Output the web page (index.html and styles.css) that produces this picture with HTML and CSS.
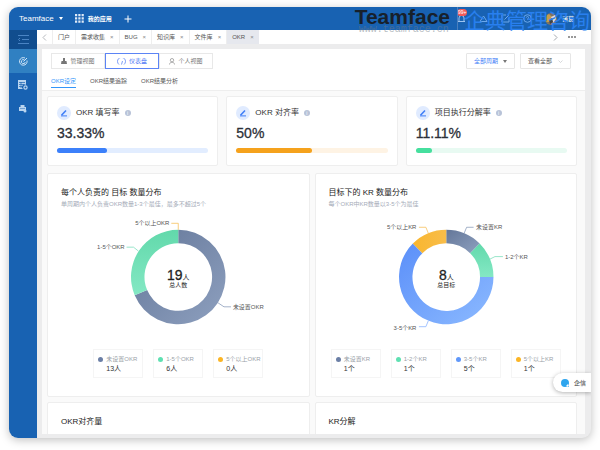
FILE: index.html
```
<!DOCTYPE html>
<html lang="zh-CN">
<head>
    <meta charset="UTF-8">
    <title>Teamface OKR</title>
    <link rel="stylesheet" href="styles.css">
</head>
<body>
<div class="window">
    <header class="topbar">
        <button class="brand">Teamface <i class="caret"></i></button>
        <button class="apps">
            <svg width="9" height="9" viewBox="0 0 9 9" fill="#dfeaf7"><path d="M0 0h2.2v2.2H0zM3.3 0h2.2v2.2H3.3zM6.6 0h2.2v2.2H6.6zM0 3.3h2.2v2.2H0zM3.3 3.3h2.2v2.2H3.3zM6.6 3.3h2.2v2.2H6.6zM0 6.6h2.2v2.2H0zM3.3 6.6h2.2v2.2H3.3zM6.6 6.6h2.2v2.2H6.6z"/></svg>
            我的应用
        </button>
        <button class="add" aria-label="新建"><svg width="8" height="8" viewBox="0 0 8 8" stroke="#fff"><path d="M4 .5v7M.5 4h7"/></svg></button>
        <div class="tools">
            <button class="bell" aria-label="通知">
                <svg width="9" height="9" viewBox="0 0 9 9" fill="none" stroke="#9dc4f0"><path d="M1 7.500h7M2 7V4a2.500 2.500 0 0 1 5 0v3"/></svg>
                <span class="badge">99+</span>
            </button>
            <button aria-label="消息"><svg width="9" height="9" viewBox="0 0 9 9" fill="none" stroke="#6ba6ea"><path d="M1 7.500L4.500 2 8 7.500z"/></svg></button>
            <button aria-label="编辑"><svg width="9" height="9" viewBox="0 0 9 9" fill="none" stroke="#6ba6ea"><path d="M5 1H1v7h7V4M3.500 5.500L8 1"/></svg></button>
            <button aria-label="帮助"><svg width="9" height="9" viewBox="0 0 9 9" fill="none" stroke="#6ba6ea"><circle cx="4.500" cy="4.500" r="3.800"/><path d="M3.500 3.500c0-1.500 2-1.500 2 0 0 1-1 1-1 2"/></svg></button>
            <button class="user">
                <svg width="12" height="12" viewBox="0 0 12 12"><circle cx="6" cy="6" r="6" fill="#7e7462"/><path d="M1 9a6 6 0 0 1 3-8l3 3-2 5z" fill="#c59a4e"/><path d="M6 4l4-2 1 4-3 4z" fill="#d9dce0"/><path d="M4 7l3-2 1 4-3 2z" fill="#3f4247"/></svg>
                诸葛
            </button>
        </div>
        <div class="mark">
            <div class="mark-en"><b>Teamface</b><span>www.teamface.cn</span></div>
            <div class="mark-cn">企典管理咨询</div>
        </div>
    </header>
    <div class="main">
        <nav class="sidebar">
            <a href="#" class="fold" aria-label="收起"><svg width="11" height="9" viewBox="0 0 11 9" fill="none" stroke="#4a84c4"><path d="M0 .5h11M4 4.500h7M0 8.500h11M2 3L.5 4.500 2 6"/></svg></a>
            <a href="#" class="active" aria-label="目标"><svg width="9" height="9" viewBox="0 0 9 9" fill="none" stroke="#cfe3f6"><path d="M6 1A3.800 3.800 0 1 0 8 3.500M5.500 3A2 2 0 1 0 6.300 5M4.500 4.500L8 1"/></svg></a>
            <a href="#" aria-label="报表"><svg width="10" height="10" viewBox="0 0 10 10"><path d="M0 0h8v5a2.500 2.500 0 0 0-3 4H0z" fill="#b9d4ef"/><path d="M1 2.500h6M1 4.500h5M1 6.500h3M3 2v6" stroke="#1862b2" stroke-width=".7"/><circle cx="7.500" cy="7.500" r="1.600" fill="none" stroke="#b9d4ef" stroke-width="1.200"/></svg></a>
            <a href="#" aria-label="项目"><svg width="8" height="8" viewBox="0 0 8 8"><path d="M1.500 0h4v2H7v3L5 6H0V2h1.500z" fill="#b9d4ef"/><path d="M1 3.500h5" stroke="#6d9fd3"/><circle cx="6" cy="6" r="1.500" fill="#b9d4ef"/></svg></a>
        </nav>
        <div class="workspace">
            <div class="tabs">
                <button class="nav-arrow" aria-label="向左"><svg width="5" height="7" viewBox="0 0 5 7" fill="none" stroke="#b5b8bd"><path d="M4 .5l-3 3 3 3"/></svg></button>
                <button class="tab">门户</button>
                <button class="tab">需求收集 <i>×</i></button>
                <button class="tab">BUG <i>×</i></button>
                <button class="tab">知识库 <i>×</i></button>
                <button class="tab">文件库 <i>×</i></button>
                <button class="tab on">OKR <i>×</i></button>
                <button class="nav-arrow next" aria-label="向右"><svg width="5" height="7" viewBox="0 0 5 7" fill="none" stroke="#a5a8ad"><path d="M1 .5l3 3-3 3"/></svg></button>
                <button class="more" aria-label="更多"><svg width="8" height="2" viewBox="0 0 8 2" fill="#777"><circle cx="1" cy="1" r="1"/><circle cx="4" cy="1" r="1"/><circle cx="7" cy="1" r="1"/></svg></button>
            </div>
            <div class="page">
                <div class="page-head">
                    <div class="toolbar">
                        <div class="views">
                            <button><svg width="6" height="6" viewBox="0 0 6 6" fill="#777"><path d="M2 3V0h2v3h1.500L6 6H0l.5-3z"/></svg>管理视图</button>
                            <button class="on"><svg width="9" height="7" viewBox="0 0 9 7" fill="none" stroke="#5c84f5" stroke-width=".8"><path d="M2 6.500a4 4 0 1 1 5 0M4.500 6.500L5.500 3"/></svg>仪表盘</button>
                            <button><svg width="6" height="7" viewBox="0 0 6 7" fill="none" stroke="#999" stroke-width=".8"><circle cx="3" cy="2.200" r="1.700"/><path d="M.5 6.500c0-3 5-3 5 0"/></svg>个人视图</button>
                        </div>
                        <div class="filters">
                            <button class="period">全部周期 <i class="caret"></i></button>
                            <button class="scope">查看全部 <svg width="5" height="3" viewBox="0 0 5 3" fill="none" stroke="#c5c8cc" stroke-width=".7"><path d="M.5.5l2 2 2-2"/></svg></button>
                        </div>
                    </div>
                    <nav class="subnav">
                        <a href="#" class="on">OKR设定</a>
                        <a href="#">OKR结果追踪</a>
                        <a href="#">OKR结果分析</a>
                    </nav>
                </div>
                <div class="board">
                    <div class="stats">
                        <section class="card stat">
                            <h3><svg class="pen" width="14" height="14" viewBox="0 0 14 14"><circle cx="7" cy="7" r="7" fill="#e0ebff"/><path d="M4.500 9.200l4.500-4.700" stroke="#3f7ef7" stroke-width="1.600"/><path d="M4 9.900h6" stroke="#3f7ef7"/></svg>OKR 填写率<span class="info">i</span></h3>
                            <strong>33.33%</strong>
                            <div class="bar blue"><div style="width:33.33%"></div></div>
                        </section>
                        <section class="card stat">
                            <h3><svg class="pen" width="14" height="14" viewBox="0 0 14 14"><circle cx="7" cy="7" r="7" fill="#e0ebff"/><path d="M4.500 9.200l4.500-4.700" stroke="#3f7ef7" stroke-width="1.600"/><path d="M4 9.900h6" stroke="#3f7ef7"/></svg>OKR 对齐率<span class="info">i</span></h3>
                            <strong>50%</strong>
                            <div class="bar orange"><div style="width:50%"></div></div>
                        </section>
                        <section class="card stat">
                            <h3><svg class="pen" width="14" height="14" viewBox="0 0 14 14"><circle cx="7" cy="7" r="7" fill="#e0ebff"/><path d="M4.500 9.200l4.500-4.700" stroke="#3f7ef7" stroke-width="1.600"/><path d="M4 9.900h6" stroke="#3f7ef7"/></svg>项目执行分解率<span class="info">i</span></h3>
                            <strong>11.11%</strong>
                            <div class="bar green"><div style="width:11.11%"></div></div>
                        </section>
                    </div>
                    <div class="charts">
                        <section class="card chart">
                            <h3>每个人负责的 目标 数量分布</h3>
                            <p>单周期内个人负责OKR数量1-3个最佳，最多不超过5个</p>
                            <svg class="donut" viewBox="-131 -64 262 124" width="262" height="124">
                                <defs>
                                    <linearGradient id="slate" x1="0" y1="0" x2="1" y2="1"><stop offset="0" stop-color="#647799"/><stop offset="1" stop-color="#8ea0bf"/></linearGradient>
                                    <linearGradient id="mint" x1="0" y1="0" x2="0" y2="1"><stop offset="0" stop-color="#62d9ab"/><stop offset="1" stop-color="#84e8c4"/></linearGradient>
                                    <linearGradient id="sky" x1="0" y1="0" x2="1" y2="1"><stop offset="0" stop-color="#5b8ff9"/><stop offset="1" stop-color="#8cbaff"/></linearGradient>
                                    <linearGradient id="amber" x1="0" y1="0" x2="1" y2="0"><stop offset="0" stop-color="#f9b62e"/><stop offset="1" stop-color="#f8bd4a"/></linearGradient>
                                </defs>
                                <path fill="url(#slate)" d="M0-47.500A47.500 47.500 0 1 1-43.800 18.400L-31.300 13.200A34 34 0 1 0 0-34z"/>
                                <path fill="url(#mint)" d="M-43.800 18.400A47.500 47.500 0 0 1 0-47.500V-34A34 34 0 0 0-31.300 13.200z"/>
                                <g class="lead"><path stroke="#f6c15c" d="M0-47.500V-54h-7"/><path stroke="#7fe0bd" d="M-40-26l-5-4h-7"/><path stroke="#8c9ebb" d="M40 26l6 4h7"/></g>
                                <g class="label"><text x="-9" y="-52" text-anchor="end">5个以上OKR</text><text x="-54" y="-28" text-anchor="end">1-5个OKR</text><text x="55" y="32">未设置OKR</text></g>
                                <text class="total" y="3" text-anchor="middle">19<tspan>人</tspan></text>
                                <text class="caption" y="10" text-anchor="middle">总人数</text>
                            </svg>
                            <ul class="legend">
                                <li class="c-slate">未设置OKR<b>13人</b></li>
                                <li class="c-mint">1-5个OKR<b>6人</b></li>
                                <li class="c-amber">5个以上OKR<b>0人</b></li>
                            </ul>
                        </section>
                        <section class="card chart">
                            <h3>目标下的 KR 数量分布</h3>
                            <p>每个OKR中KR数量以3-5个为最佳</p>
                            <svg class="donut" viewBox="-131 -64 262 124" width="262" height="124">
                                <path fill="url(#slate)" d="M0-47.500A47.500 47.500 0 0 1 33.600-33.600L24-24A34 34 0 0 0 0-34z"/>
                                <path fill="url(#mint)" d="M33.600-33.600A47.500 47.500 0 0 1 47.500 0H34A34 34 0 0 0 24-24z"/>
                                <path fill="url(#sky)" d="M47.500 0A47.500 47.500 0 1 1-33.600-33.600L-24-24A34 34 0 1 0 34 0z"/>
                                <path fill="url(#amber)" d="M-33.600-33.600A47.500 47.500 0 0 1 0-47.500V-34A34 34 0 0 0-24-24z"/>
                                <g class="lead"><path stroke="#8c9ebb" d="M18-44l2.500-6h7"/><path stroke="#7fe0bd" d="M44-18l5-2.500h8"/><path stroke="#f6c15c" d="M-18-44l-2.500-6h-7"/><path stroke="#8cb5ff" d="M-18 44l-2.500 6h-7"/></g>
                                <g class="label"><text x="30" y="-48">未设置KR</text><text x="59" y="-18">1-2个KR</text><text x="-30" y="-48" text-anchor="end">5个以上KR</text><text x="-30" y="53" text-anchor="end">3-5个KR</text></g>
                                <text class="total" y="3" text-anchor="middle">8<tspan>人</tspan></text>
                                <text class="caption" y="10" text-anchor="middle">总目标</text>
                            </svg>
                            <ul class="legend">
                                <li class="c-slate">未设置KR<b>1个</b></li>
                                <li class="c-mint">1-2个KR<b>1个</b></li>
                                <li class="c-sky">3-5个KR<b>5个</b></li>
                                <li class="c-amber">5个以上KR<b>1个</b></li>
                            </ul>
                        </section>
                        <section class="card chart"><h3>OKR对齐量</h3></section>
                        <section class="card chart"><h3>KR分解</h3></section>
                    </div>
                </div>
            </div>
        </div>
    </div>
    <button class="chat"><svg width="8" height="8" viewBox="0 0 8 8"><path d="M4 0a4 4 0 1 1 0 8 4 4 0 0 1 0-8zM5 7l3 1-1-3z" fill="#2ea5ee"/></svg>企信</button>
</div>
</body>
</html>
```
FILE: styles.css
```
* {
    box-sizing: border-box;
}
body, html {
    margin: 0;
    padding: 0;
    height: 100%;
}
body {
    padding: 7px 9px 12px;
    background: #fff;
    font-family: "Liberation Sans", "Noto Sans CJK SC", sans-serif;
    font-size: 6px;
    line-height: 8px;
    color: #555;
}
button {
    display: flex;
    align-items: center;
    padding: 0;
    border: none;
    background: none;
    font: inherit;
    color: inherit;
    white-space: nowrap;
    cursor: pointer;
}
a {
    color: inherit;
    text-decoration: none;
}
svg {
    display: block;
    flex-shrink: 0;
}
h3, p, ul {
    margin: 0;
    padding: 0;
    font-weight: normal;
    list-style: none;
}
.window {
    position: relative;
    display: flex;
    flex-direction: column;
    height: 100%;
    border-radius: 9px;
    overflow: hidden;
    background: #ececed;
    box-shadow: 0 2px 10px rgba(0,0,0,0.25);
}

/* top bar */
.topbar {
    position: relative;
    display: flex;
    align-items: center;
    flex-shrink: 0;
    height: 23px;
    padding: 0 17px 0 10px;
    background: #1862b2;
    color: #fff;
}
.brand {
    gap: 5px;
    font-size: 8px;
    margin-right: 12px;
}
.apps {
    gap: 4px;
    margin-right: 12px;
    font-weight: bold;
}
.caret {
    border: 2px solid transparent;
    border-top: 3px solid;
    border-bottom: 0;
}
.tools {
    display: flex;
    align-items: center;
    gap: 13px;
    margin-left: auto;
}
.bell {
    position: relative;
}
.badge {
    position: absolute;
    left: 0;
    top: -5px;
    padding: 0 1px;
    border-radius: 4px;
    background: #f25a5a;
    font-size: 5px;
    line-height: 7px;
}
.user {
    gap: 5px;
}
.mark {
    position: absolute;
    top: 0;
    right: 1px;
    display: flex;
    color: #17202b;
    pointer-events: none;
}
.mark-en {
    padding-right: 7px;
}
.mark-en b {
    display: block;
    font-size: 21px;
    line-height: 20px;
}
.mark-en span {
    display: block;
    padding-left: 4px;
    font: 10px/6px "Liberation Mono", monospace;
    color: rgba(110,120,130,0.5);
}
.mark-cn {
    height: 23px;
    padding-left: 6px;
    border-left: 1px solid #4a7fbd;
    font-size: 21px;
    line-height: 27px;
    color: #287fee;
}

/* sidebar */
.main {
    display: flex;
    flex: 1;
    min-height: 0;
}
.sidebar {
    flex-shrink: 0;
    width: 28px;
    background: #1862b2;
}
.sidebar a {
    display: flex;
    align-items: center;
    justify-content: center;
    height: 24px;
}
.sidebar .fold {
    height: 19px;
    background: #114d8e;
}
.sidebar .active {
    background: #3080c2;
}
.workspace {
    display: flex;
    flex-direction: column;
    flex: 1;
    min-width: 0;
}

/* opened tabs */
.tabs {
    display: flex;
    flex-shrink: 0;
    height: 14px;
    padding-right: 15px;
    background: #fff;
}
.nav-arrow {
    padding: 0 5px;
}
.tab {
    gap: 5px;
    padding: 0 5px;
    border-left: 1px solid #eee;
}
.tab i {
    font-style: normal;
    color: #888;
}
.tab.on {
    background: #e6e8ee;
}
.next {
    margin-left: auto;
    margin-right: 5px;
}

/* page */
.page {
    flex: 1;
    min-height: 0;
    margin: 5px 6px 4px 5px;
    overflow: hidden;
    background: #fafafa;
}
.page-head {
    padding: 4px 14px 0 9px;
    border-bottom: 1px solid #eee;
    background: #fff;
}
.toolbar, .views, .filters, .subnav {
    display: flex;
}
.toolbar {
    justify-content: space-between;
}
.views button {
    justify-content: center;
    gap: 3px;
    width: 54px;
    height: 16px;
    border: 1px solid #e8e8e8;
    color: #777;
}
.views .on {
    border-color: #5c84f5;
    color: #3f6ff5;
}
.filters {
    gap: 5px;
}
.filters button {
    height: 16px;
    padding: 0 7px;
    border: 1px solid #e6e6e6;
    border-radius: 1px;
}
.period {
    gap: 5px;
    color: #3f7ef7;
}
.period .caret {
    color: #777;
}
.scope {
    gap: 6px;
}
.subnav {
    gap: 14px;
}
.subnav a {
    padding: 8px 0 2px;
    border-bottom: 1px solid transparent;
    margin-bottom: 2px;
}
.subnav .on {
    border-color: #3296fa;
    color: #3296fa;
}

/* cards */
.board {
    padding: 5px 8px 0 5px;
}
.stats {
    display: grid;
    grid-template-columns: repeat(3, 1fr);
    gap: 8px;
    margin-bottom: 7px;
}
.charts {
    display: grid;
    grid-template-columns: repeat(2, 1fr);
    gap: 5px;
}
.card {
    border: 1px solid #eee;
    border-radius: 2px;
    background: #fff;
}
.stat {
    height: 70px;
    padding: 9px 9px 0;
}
.stat h3 {
    display: flex;
    align-items: center;
    gap: 5px;
    font-size: 8px;
    color: #333;
}
.info {
    width: 6px;
    border-radius: 3px;
    background: #b8c3d8;
    font-size: 5px;
    line-height: 6px;
    text-align: center;
    color: #fff;
}
.stat strong {
    display: block;
    margin: 5px 0 7px;
    font-size: 14px;
    font-weight: normal;
    line-height: 16px;
    color: #2c3038;
    -webkit-text-stroke: 0.3px;
}
.bar, .bar div {
    height: 5px;
    border-radius: 3px;
}
.blue {
    background: #e2edff;
}
.blue div {
    background: #3c80fa;
}
.orange {
    background: #fef3e4;
}
.orange div {
    background: #f5a21d;
}
.green {
    background: #e8faf2;
}
.green div {
    background: #46df9e;
}

/* charts */
.chart {
    padding: 13px 0 18px;
}
.chart h3 {
    padding: 0 13px;
    font-size: 8px;
    line-height: 12px;
    color: #222;
}
.chart p {
    padding: 1px 13px 0;
    color: #a5abb8;
}
.donut {
    display: block;
    max-width: 100%;
    margin: 5px auto 12px;
    overflow: visible;
}
.lead path {
    fill: none;
    stroke-width: 0.8;
}
.label {
    fill: #555;
}
.total {
    font-size: 14px;
    fill: #222;
    stroke: #222;
    stroke-width: 0.3;
}
.total tspan {
    font-size: 7px;
    stroke: none;
}
.caption {
    fill: #222;
}
.legend {
    display: flex;
    justify-content: center;
    gap: 10px;
}
.legend li {
    position: relative;
    width: 50px;
    height: 29px;
    padding: 5px 0 0 12px;
    border: 1px solid #f5f5f5;
    white-space: nowrap;
    color: #9a9fa8;
}
.legend li::before {
    content: "";
    position: absolute;
    left: 4px;
    top: 7px;
    width: 5px;
    height: 5px;
    border-radius: 50%;
}
.legend b {
    display: block;
    margin-top: 2px;
    font-weight: normal;
    font-size: 7px;
    color: #333;
}
.legend .c-slate::before {
    background: #6b7fa6;
}
.legend .c-mint::before {
    background: #5fe0b2;
}
.legend .c-sky::before {
    background: #6098fa;
}
.legend .c-amber::before {
    background: #fbb525;
}

/* floating chat entry */
.chat {
    position: absolute;
    right: 0;
    bottom: 46px;
    gap: 5px;
    height: 19px;
    padding: 0 5px 0 8px;
    border-radius: 10px 0 0 10px;
    background: #fff;
    box-shadow: 0 1px 4px rgba(0,0,0,0.3);
    color: #444;
}
```
